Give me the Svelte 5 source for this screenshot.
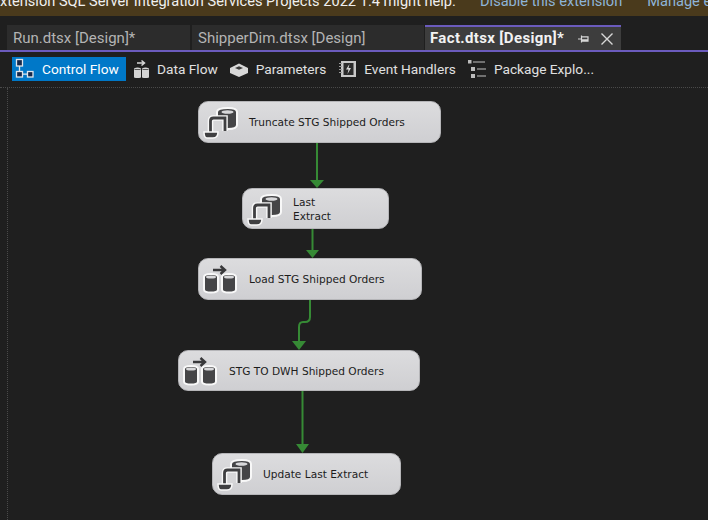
<script>
  const tabs = [
    { label: "Run.dtsx [Design]*", width: 183 },
    { label: "ShipperDim.dtsx [Design]", width: 232 }
  ];

  const nodes = [
    { lines: ["Truncate STG Shipped Orders"], icon: "sql", x: 198, y: 13, w: 243, h: 42 },
    { lines: ["Last", "Extract"], icon: "sql", x: 242, y: 100, w: 147, h: 41 },
    { lines: ["Load STG Shipped Orders"], icon: "flow", x: 198, y: 170, w: 224, h: 42 },
    { lines: ["STG TO DWH Shipped Orders"], icon: "flow", x: 178, y: 262, w: 242, h: 41 },
    { lines: ["Update Last Extract"], icon: "sql", x: 212, y: 365, w: 189, h: 42 }
  ];

  const links = [
    { d: "M317 55V93", tip: "310,92 324,92 317,100" },
    { d: "M312.500 141V163", tip: "306,162 319,162 312.500,170" },
    { d: "M310 212V229Q310 234 305 234H303Q299 234 299 239V254", tip: "292,253 306,253 299,262" },
    { d: "M302.500 303V357", tip: "296,356 309,356 302.500,365" }
  ];
</script>

<div class="ide">
  <div class="banner">
    <span class="notice">xtension SQL Server Integration Services Projects 2022 1.4 might help.</span>
    <span class="action first">Disable this extension</span>
    <span class="action">Manage extensions</span>
  </div>

  <div class="tabs">
    {#each tabs as tab}
      <div class="tab" style="width: {tab.width}px">{tab.label}</div>
    {/each}
    <div class="tab active">
      <span class="active-label">Fact.dtsx [Design]*</span>
      <svg class="pin" width="14" height="14" viewBox="0 0 14 14">
        <path d="M1 7H4.500M4.500 3.500V10.500M4.500 4.800H11V9.200H4.500M4.500 7.800H11" fill="none" stroke="#d8d8d8" stroke-width="1.200" />
      </svg>
      <svg class="close" width="14" height="14" viewBox="0 0 14 14">
        <path d="M1.500 1.500L12.500 12.500M12.500 1.500L1.500 12.500" fill="none" stroke="#d8d8d8" stroke-width="1.400" />
      </svg>
    </div>
  </div>

  <div class="toolbar">
    <div class="tool selected">
      <svg width="22" height="22" viewBox="0 0 22 22">
        <g fill="#16284a" stroke="#dfe5ec" stroke-width="1.300">
          <rect x="2.500" y="1.500" width="6" height="6.500" />
          <rect x="2.500" y="13.500" width="6" height="5.500" />
          <rect x="13.500" y="13.500" width="5.500" height="5.500" />
        </g>
        <path d="M5.500 8V13.500M8.500 16.200H13.500" stroke="#dfe5ec" stroke-width="1.300" />
      </svg>
      <span>Control Flow</span>
    </div>
    <div class="tool">
      <svg width="22" height="22" viewBox="0 0 22 22">
        <path d="M9 5H16M13.500 2.500L16.500 5L13.500 7.500" fill="none" stroke="#d8d8d8" stroke-width="1.500" />
        <path d="M6 10.500Q9.500 8.500 13 10.500V19.500Q9.500 20.500 6 19.500Z M14 10.500Q17.500 8.500 21 10.500V19.500Q17.500 20.500 14 19.500Z" fill="#d4d4d4" />
        <path d="M6.500 11.500H12.500M14.500 11.500H20.500" stroke="#555" stroke-width="1" />
      </svg>
      <span>Data Flow</span>
    </div>
    <div class="tool">
      <svg width="22" height="22" viewBox="0 0 22 22">
        <path d="M3 10L12 5.500L21 10V15L12 19L3 15Z" fill="#d8d8d8" />
        <path d="M8 10L12 8.200L16 10L12 11.800Z" fill="#3a3a3a" />
      </svg>
      <span>Parameters</span>
    </div>
    <div class="tool tight">
      <svg width="22" height="22" viewBox="0 0 22 22">
        <rect x="6" y="3" width="15" height="16" fill="#c8c8c8" />
        <rect x="8.500" y="5" width="10" height="12" fill="#2b2b2b" />
        <path d="M14.500 6L11 11.500H13.500L12.500 16L16 10H13.500Z" fill="#d8d8d8" />
        <path d="M4 5.500H7M4 8.500H7M4 11.500H7M4 14.500H7" stroke="#9a9a9a" stroke-width="1" />
      </svg>
      <span>Event Handlers</span>
    </div>
    <div class="tool">
      <svg width="22" height="22" viewBox="0 0 22 22">
        <g fill="#bdbdbd">
          <rect x="3" y="2" width="3.500" height="3.500" />
          <rect x="6" y="9" width="4" height="4" />
          <rect x="6" y="16" width="4" height="4" />
        </g>
        <path d="M8 4H20M12 11H21M12 18H21" stroke="#8c8c8c" stroke-width="1.500" />
      </svg>
      <span>Package Explo...</span>
    </div>
  </div>

  <div class="canvas">
    <svg class="links" width="708" height="432" viewBox="0 0 708 432">
      {#each links as link}
        <path d={link.d} fill="none" stroke="#368a35" stroke-width="2" />
        <polygon points={link.tip} fill="#368a35" />
      {/each}
    </svg>

    {#each nodes as node}
      <div class="node" style="left: {node.x}px; top: {node.y}px; width: {node.w}px; height: {node.h}px">
        {#if node.icon === "sql"}
          <svg class="task-icon" width="38" height="36" viewBox="0 0 38 36">
            <path d="M14 8Q14 4 25 4Q34 4 34 8V21Q34 25 25 25H14Z" fill="#454547" stroke="#f8f8f8" stroke-width="2" />
            <ellipse cx="24.500" cy="8" rx="6" ry="1.800" fill="#d8d8da" />
            <path d="M8 16H20V27H8Z" fill="#d6d6d8" />
            <path d="M7.500 29V17Q7.500 14 10.500 14H22V27" fill="none" stroke="#f8f8f8" stroke-width="5.600" />
            <path d="M7.500 29V17Q7.500 14 10.500 14H22V27" fill="none" stroke="#3f3f41" stroke-width="2.800" />
            <path d="M1 28H15Q15 34 10 34H4Q1 34 1 28Z" fill="#3f3f41" stroke="#f8f8f8" stroke-width="1.500" />
          </svg>
        {:else}
          <svg class="task-icon" width="38" height="36" viewBox="0 0 38 36">
            <path d="M10 9H21M17.500 5L22 9L17.500 13" fill="none" stroke="#38383a" stroke-width="2.400" />
            <g stroke="#f8f8f8" stroke-width="2">
              <path d="M1 16Q1 13 8 13Q15 13 15 16V28.500Q15 31.500 8 31.500Q1 31.500 1 28.500Z" fill="#454547" />
              <path d="M19 16Q19 13 26 13Q33 13 33 16V28.500Q33 31.500 26 31.500Q19 31.500 19 28.500Z" fill="#454547" />
            </g>
            <ellipse cx="8" cy="16" rx="5" ry="1.500" fill="#d8d8da" />
            <ellipse cx="26" cy="16" rx="5" ry="1.500" fill="#d8d8da" />
          </svg>
        {/if}
        <div class="node-label">
          {#each node.lines as line}
            <div>{line}</div>
          {/each}
        </div>
      </div>
    {/each}
  </div>
</div>

<style>
  :global(body) {
    background: #1f1f1f;
  }

  .ide {
    width: 708px;
    height: 520px;
    display: flex;
    flex-direction: column;
    overflow: hidden;
    background: #1f1f1f;
    font-family: Roboto, "Open Sans", sans-serif;
    color: #e0e0e0;
  }

  .banner {
    height: 16px;
    flex: none;
    display: flex;
    align-items: flex-end;
    background: #4a3a1c;
    font-size: 14.600px;
    line-height: 20px;
    white-space: nowrap;
    color: #f0f0f0;
  }

  .notice {
    margin-bottom: 5px;
    width: 480px;
    flex: none;
  }

  .action {
    margin-bottom: 5px;
    margin-left: 25px;
    color: #8eb4d8;
  }

  .action.first {
    margin-left: 0;
  }

  .tabs {
    height: 25px;
    flex: none;
    margin-top: 9px;
    padding-left: 7px;
    display: flex;
    gap: 2px;
    border-bottom: 2px solid #6b5bbd;
    font-size: 15px;
  }

  .tab {
    display: flex;
    align-items: center;
    padding-left: 6px;
    box-sizing: border-box;
    background: #2c2c2c;
    color: #b4b4b4;
    white-space: nowrap;
  }

  .tab.active {
    width: 196px;
    margin-left: -1px;
    padding-left: 5px;
    background: #3d3d3d;
    border-top: 2px solid #6b5bbd;
    color: #f2f2f2;
  }

  .active-label {
    font-weight: 700;
    letter-spacing: 0.350px;
    width: 147px;
    flex: none;
    margin-top: -1px;
  }

  .close {
    margin-left: 9px;
  }

  .toolbar {
    height: 36px;
    flex: none;
    padding: 5px 0 0 12px;
    box-sizing: border-box;
    display: flex;
    align-items: flex-start;
    font-size: 13.700px;
    border-bottom: 1px dotted #4a4a4a;
  }

  .tool {
    height: 24px;
    display: flex;
    align-items: center;
    gap: 7px;
    padding-right: 9px;
    white-space: nowrap;
  }

  .tool.tight {
    padding-right: 9px;
  }

  .tool span {
    margin-top: -1px;
  }

  .tool svg {
    flex: none;
  }

  .tool.selected {
    width: 114px;
    box-sizing: border-box;
    background: #0078c8;
    color: #fff;
    padding: 0 0 0 2px;
    gap: 6px;
    margin-right: 2px;
  }

  .canvas {
    position: relative;
    flex: 1;
    margin-left: 7px;
    border-left: 1px dotted #4a4a4a;
  }

  .links {
    position: absolute;
    left: -8px;
    top: 0;
  }

  .node {
    position: absolute;
    margin-left: -8px;
    box-sizing: border-box;
    display: flex;
    align-items: center;
    padding-left: 4px;
    border-radius: 10px;
    background: linear-gradient(#dcdcde, #cfcfd2);
    border: 1px solid #b5b5b8;
    color: #1c1c1c;
  }

  .task-icon {
    flex: none;
  }

  .node-label {
    margin-left: 8px;
    font-family: "DejaVu Sans", Verdana, sans-serif;
    font-size: 10.600px;
    line-height: 14px;
    white-space: nowrap;
  }
</style>
